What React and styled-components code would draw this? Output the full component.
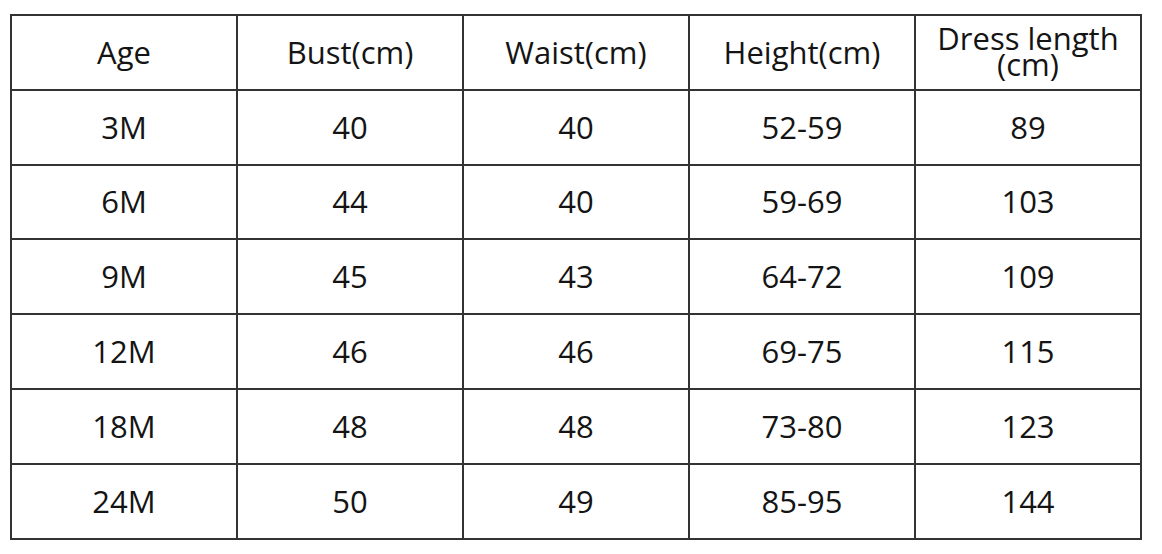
import React from 'react';
import styled, { createGlobalStyle } from 'styled-components';

const GlobalStyle = createGlobalStyle`
  html, body {
    margin: 0;
    background: #ffffff;
  }
  body {
    font-family: "Open Sans", "Noto Sans", sans-serif;
    color: #141414;
  }
`;

const headers = ['Age', 'Bust(cm)', 'Waist(cm)', 'Height(cm)', ['Dress length', '(cm)']];

const rows = [
  ['3M', '40', '40', '52-59', '89'],
  ['6M', '44', '40', '59-69', '103'],
  ['9M', '45', '43', '64-72', '109'],
  ['12M', '46', '46', '69-75', '115'],
  ['18M', '48', '48', '73-80', '123'],
  ['24M', '50', '49', '85-95', '144'],
];

const Page = styled.div`
  padding: 14px 0 0 10px;
`;

const Table = styled.table`
  border-collapse: collapse;
  table-layout: fixed;
  width: 1132px;
`;

const Cell = styled.td`
  height: 72.8px;
  padding: 0;
  border: 2px solid #333;
  text-align: center;
  vertical-align: middle;
  font-size: 31px;
  line-height: 1;
`;

const HeadCell = styled(Cell).attrs({ as: 'th' })`
  font-weight: 400;
`;

const Stacked = styled.span`
  display: block;
  line-height: 28px;
  margin-top: -2px;
`;

export default function App() {
  return (
    <Page>
      <GlobalStyle />
      <Table>
        <thead>
          <tr>
            {headers.map((h, i) => (
              <HeadCell key={i}>
                {Array.isArray(h) ? h.map((line) => <Stacked key={line}>{line}</Stacked>) : h}
              </HeadCell>
            ))}
          </tr>
        </thead>
        <tbody>
          {rows.map((r) => (
            <tr key={r[0]}>
              {r.map((v, i) => (
                <Cell key={i}>{v}</Cell>
              ))}
            </tr>
          ))}
        </tbody>
      </Table>
    </Page>
  );
}
